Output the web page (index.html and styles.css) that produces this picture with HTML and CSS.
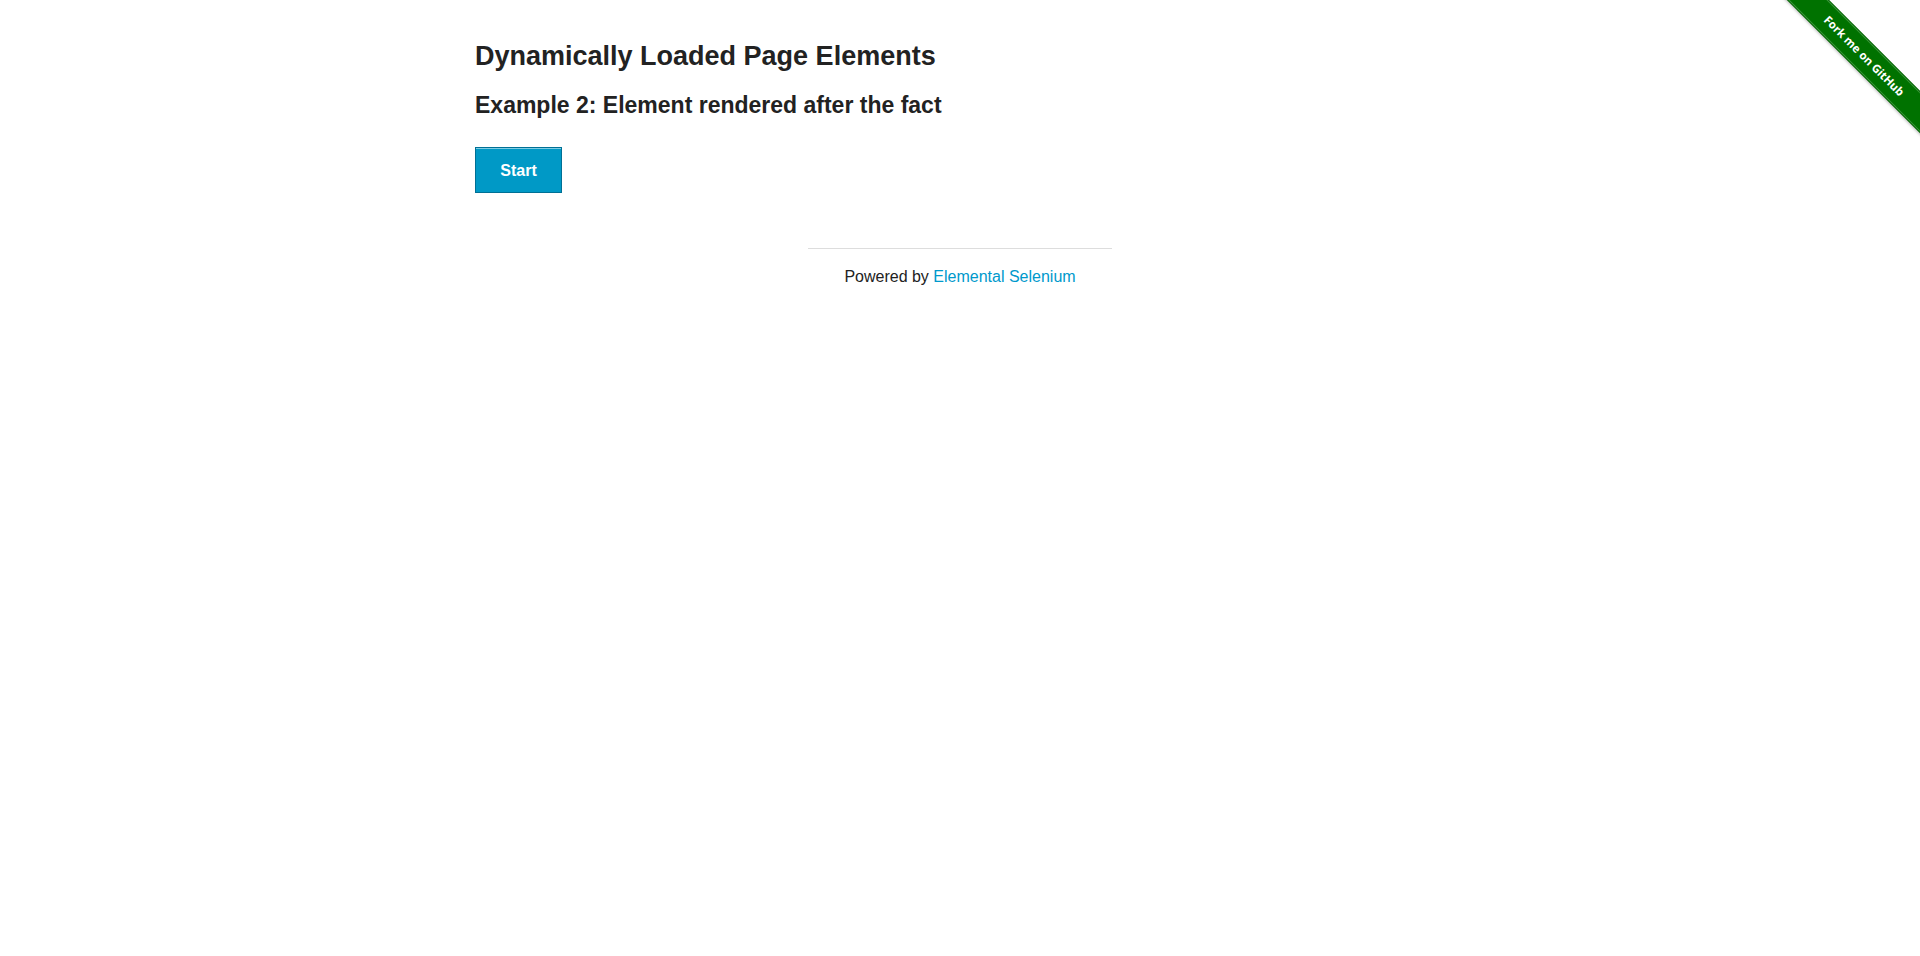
FILE: index.html
```html
<!DOCTYPE html>
<html lang="en">
<head>
<meta charset="utf-8">
<title>The Internet</title>
<link rel="stylesheet" href="styles.css">
</head>
<body>
<div class="ribbon-wrap">
  <a class="ribbon" href="#">Fork me on GitHub</a>
</div>
<div class="row">
  <div class="content">
    <h3 class="title">Dynamically Loaded Page Elements</h3>
    <h4 class="subtitle">Example 2: Element rendered after the fact</h4>
    <div class="start">
      <button class="btn">Start</button>
    </div>
  </div>
</div>
<footer class="footer">
  <hr class="rule">
  <div class="powered">Powered by <a class="link" href="#">Elemental Selenium</a></div>
</footer>
</body>
</html>
```
FILE: styles.css
```css
html, body {
  margin: 0;
  padding: 0;
  background: #fff;
}
body {
  font-family: "Liberation Sans", Arial, Helvetica, sans-serif;
  color: #222;
  position: relative;
  min-height: 956px;
}
.row {
  width: 970px;
  margin: 0 auto;
}
.content {
  display: flex;
  flex-direction: column;
  align-items: flex-start;
  padding-top: 40px;
}
.title {
  margin: 0;
  font-size: 27px;
  line-height: 32px;
  font-weight: bold;
  color: #222;
}
.subtitle {
  margin: 19px 0 0;
  font-size: 23px;
  line-height: 28px;
  font-weight: bold;
  color: #222;
}
.start {
  margin-top: 28px;
}
.btn {
  width: 87px;
  height: 46px;
  background: #0099c6;
  border: 1px solid #007095;
  box-shadow: inset 0 1px 0 rgba(255,255,255,0.5);
  color: #fff;
  font-family: "Liberation Sans", Arial, sans-serif;
  font-size: 16px;
  font-weight: bold;
  padding: 2px 0 0;
  margin: 0;
}
.footer {
  width: 304px;
  margin: 55px auto 0;
  text-align: center;
}
.rule {
  margin: 0;
  border: 0;
  border-top: 1px solid #ddd;
  height: 0;
}
.powered {
  margin-top: 18px;
  font-size: 16px;
  line-height: 19px;
  color: #222;
}
.link {
  color: #0099cc;
  text-decoration: none;
}
.ribbon-wrap {
  position: absolute;
  top: 0;
  right: 0;
  width: 149px;
  height: 149px;
  overflow: hidden;
}
.ribbon {
  position: absolute;
  left: -13px;
  top: 42px;
  width: 212px;
  height: 26px;
  line-height: 26px;
  background: #007200;
  border-top: 1px solid #3c963c;
  border-bottom: 1px solid #3c963c;
  box-shadow: 0 0 0 1px #006200, 0 2px 3px rgba(0,0,0,0.25);
  transform: rotate(45deg);
  color: #fff;
  font-family: "Open Sans", "DejaVu Sans", sans-serif;
  font-size: 11.5px;
  font-weight: 700;
  text-align: center;
  text-decoration: none;
}
```
